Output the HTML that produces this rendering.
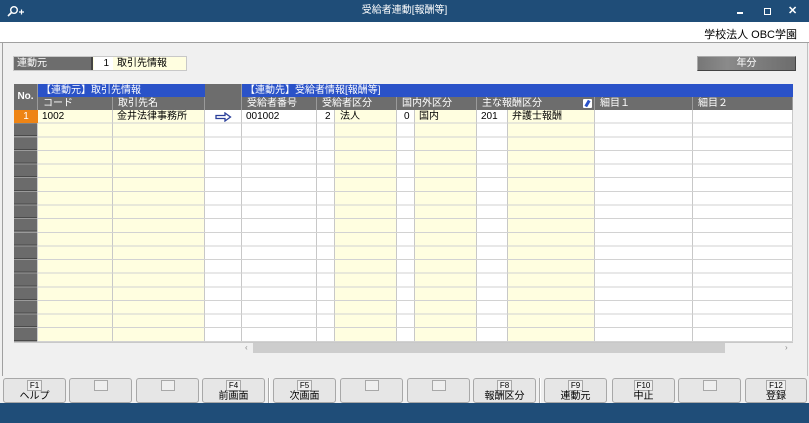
<!DOCTYPE html>
<html><head><meta charset="utf-8"><style>
*{margin:0;padding:0;box-sizing:border-box}
body{width:809px;height:423px;overflow:hidden;background:#f0f0f0;font-family:"Liberation Sans","Noto Sans CJK JP",sans-serif;font-size:10px;color:#000;position:relative}
.a{position:absolute}
.tb{left:0;top:0;width:809px;height:22px;background:#1f4d78;color:#fff;text-align:center;line-height:22px;font-size:10px}
.wb{left:0;top:22px;width:809px;height:21px;background:#fff;border-bottom:1px solid #a0a0a0}
.col{top:110px;height:232px;border-right:1px solid #c8c8c8}
.y{background:#fffee0}.w{background:#fff}
.hd{background:#6d6d6d;color:#fff;height:13px;line-height:13px;padding-left:5px;border-right:1px solid #9a9a9a;top:97px}
.bl{background:#2a52c8;color:#fff;top:84px;height:13px;line-height:13px}
.txt{top:110px;height:14px;line-height:14px}
.btn{top:378px;height:25px;background:#e6e6e6;border:1px solid #a8a8a8;border-radius:3px;text-align:center;font-size:10px}
.btn .k{display:inline-block;margin-top:1px;min-width:14px;height:11px;line-height:10px;border:1px solid #a8a8a8;background:#efefef;font-size:8px;padding:0 2px}
.btn .l{display:block;line-height:11px}
</style></head><body>
<div class="a tb">受給者連動[報酬等]</div>
<svg class="a" style="left:6px;top:5px" width="22" height="13" viewBox="0 0 22 13"><circle cx="8" cy="5" r="3.3" fill="none" stroke="#fff" stroke-width="1.4"/><path d="M5.5 7.5L2 11" stroke="#fff" stroke-width="1.6"/><path d="M13 7h5M15.5 4.5v5" stroke="#fff" stroke-width="1.2"/></svg>
<div class="a" style="left:737px;top:12px;width:6px;height:2px;background:#fff"></div>
<div class="a" style="left:764px;top:8px;width:7px;height:7px;border:1.5px solid #fff"></div>
<div class="a" style="left:788px;top:4px;color:#fff;font-size:11px;font-weight:bold">✕</div>
<div class="a wb"><div class="a" style="right:12px;top:4px;font-size:11px">学校法人 OBC学園</div></div>
<div class="a" style="left:2px;top:43px;width:1px;height:333px;background:#a0a0a0"></div>
<div class="a" style="left:807px;top:43px;width:1px;height:333px;background:#c0c0c0"></div>

<div class="a" style="left:13px;top:56px;width:174px;height:15px;border:1px solid #c8c8c8;background:#fffee0"></div>
<div class="a" style="left:14px;top:57px;width:79px;height:13px;background:#6d6d6d;color:#fff;line-height:13px;padding-left:3px;border-right:2px solid #444">連動元</div>
<div class="a" style="left:94px;top:57px;width:19px;height:13px;background:#fff;line-height:13px;text-align:right;padding-right:4px">1</div>
<div class="a" style="left:117px;top:57px;line-height:13px">取引先情報</div>
<div class="a" style="left:697px;top:56px;width:99px;height:15px;background:linear-gradient(90deg,#777,#8a8a8a 30%,#6d6d6d);border:1px solid #444;border-color:#aaa #444 #444 #aaa;color:#fff;text-align:center;line-height:13px">年分</div>

<!-- grid headers -->
<div class="a" style="left:14px;top:84px;width:24px;height:26px;background:#6d6d6d;color:#fff;text-align:center;line-height:26px;border-right:1px solid #9a9a9a;font-weight:bold">No.</div>
<div class="a bl" style="left:38px;width:167px;padding-left:3px">【連動元】取引先情報</div>
<div class="a" style="left:205px;top:84px;width:37px;height:26px;background:#6d6d6d;border-right:1px solid #9a9a9a"></div>
<div class="a bl" style="left:242px;width:551px;padding-left:3px">【連動先】受給者情報[報酬等]</div>
<div class="a hd" style="left:38px;width:75px">コード</div>
<div class="a hd" style="left:113px;width:92px">取引先名</div>
<div class="a hd" style="left:242px;width:75px">受給者番号</div>
<div class="a hd" style="left:317px;width:80px">受給者区分</div>
<div class="a hd" style="left:397px;width:80px">国内外区分</div>
<div class="a hd" style="left:477px;width:118px">主な報酬区分</div>
<div class="a" style="left:583px;top:99px;width:9px;height:9px;background:#fff;border-radius:1px"><div style="margin:1px 0 0 3px;width:3px;height:7px;background:#2a52c8;transform:rotate(30deg)"></div></div>
<div class="a hd" style="left:595px;width:98px">細目１</div>
<div class="a hd" style="left:693px;width:100px">細目２</div>

<!-- columns -->
<div class="a col" style="left:14px;width:24px;background:repeating-linear-gradient(#6b6b6b 0,#6b6b6b 11.6px,#4a4a4a 11.6px,#4a4a4a 12.6px,#9a9a9a 12.6px,#9a9a9a 13.64px);border-right:1px solid #ccc"></div>
<div class="a" style="left:14px;top:110px;width:24px;height:13px;background:#ee8414;color:#fff;text-align:center;line-height:13px">1</div>
<div class="a col y" style="left:38px;width:75px"></div>
<div class="a col y" style="left:113px;width:92px"></div>
<div class="a col w" style="left:205px;width:37px"></div>
<div class="a col w" style="left:242px;width:75px"></div>
<div class="a col w" style="left:317px;width:18px"></div>
<div class="a col y" style="left:335px;width:62px"></div>
<div class="a col w" style="left:397px;width:18px"></div>
<div class="a col y" style="left:415px;width:62px"></div>
<div class="a col w" style="left:477px;width:31px"></div>
<div class="a col y" style="left:508px;width:87px"></div>
<div class="a col w" style="left:595px;width:98px"></div>
<div class="a col w" style="left:693px;width:100px"></div>
<div class="a" style="left:38px;top:110px;width:755px;height:232px;background:repeating-linear-gradient(transparent 0,transparent 12.64px,#d2d2d2 12.64px,#d2d2d2 13.64px)"></div>
<div class="a" style="left:14px;top:342px;width:779px;height:1px;background:#c8c8c8"></div>

<div class="a txt" style="left:42px">1002</div>
<div class="a txt" style="left:117px">金井法律事務所</div>
<svg class="a" style="left:215px;top:112px" width="17" height="10" viewBox="0 0 17 10"><path d="M1 3.5h9V1l5.5 4-5.5 4V6.5H1z" fill="#fff" stroke="#2a3f9a" stroke-width="1.3"/></svg>
<div class="a txt" style="left:246px">001002</div>
<div class="a txt" style="left:325px">2</div>
<div class="a txt" style="left:340px">法人</div>
<div class="a txt" style="left:404px">0</div>
<div class="a txt" style="left:419px">国内</div>
<div class="a txt" style="left:481px">201</div>
<div class="a txt" style="left:512px">弁護士報酬</div>

<!-- scrollbar -->
<div class="a" style="left:245px;top:343px;font-size:8px;color:#888">‹</div>
<div class="a" style="left:253px;top:343px;width:472px;height:10px;background:#cdcdcd"></div>
<div class="a" style="left:785px;top:343px;font-size:8px;color:#888">›</div>

<!-- function keys -->
<div class="a btn" style="left:3px;width:63px"><span class="k">F1</span><span class="l">ヘルプ</span></div>
<div class="a btn" style="left:69px;width:63px"><span class="k"></span></div>
<div class="a btn" style="left:136px;width:63px"><span class="k"></span></div>
<div class="a btn" style="left:202px;width:63px"><span class="k">F4</span><span class="l">前画面</span></div>
<div class="a" style="left:268px;top:378px;width:2px;height:25px;border-left:1px solid #aaa;border-right:1px solid #fff"></div>
<div class="a btn" style="left:273px;width:63px"><span class="k">F5</span><span class="l">次画面</span></div>
<div class="a btn" style="left:340px;width:63px"><span class="k"></span></div>
<div class="a btn" style="left:407px;width:63px"><span class="k"></span></div>
<div class="a btn" style="left:473px;width:63px"><span class="k">F8</span><span class="l">報酬区分</span></div>
<div class="a" style="left:539px;top:378px;width:2px;height:25px;border-left:1px solid #aaa;border-right:1px solid #fff"></div>
<div class="a btn" style="left:544px;width:63px"><span class="k">F9</span><span class="l">連動元</span></div>
<div class="a btn" style="left:612px;width:63px"><span class="k">F10</span><span class="l">中止</span></div>
<div class="a btn" style="left:678px;width:63px"><span class="k"></span></div>
<div class="a btn" style="left:745px;width:62px"><span class="k">F12</span><span class="l">登録</span></div>
<div class="a" style="left:0;top:403px;width:809px;height:20px;background:#1f4d78"></div>
</body></html>
